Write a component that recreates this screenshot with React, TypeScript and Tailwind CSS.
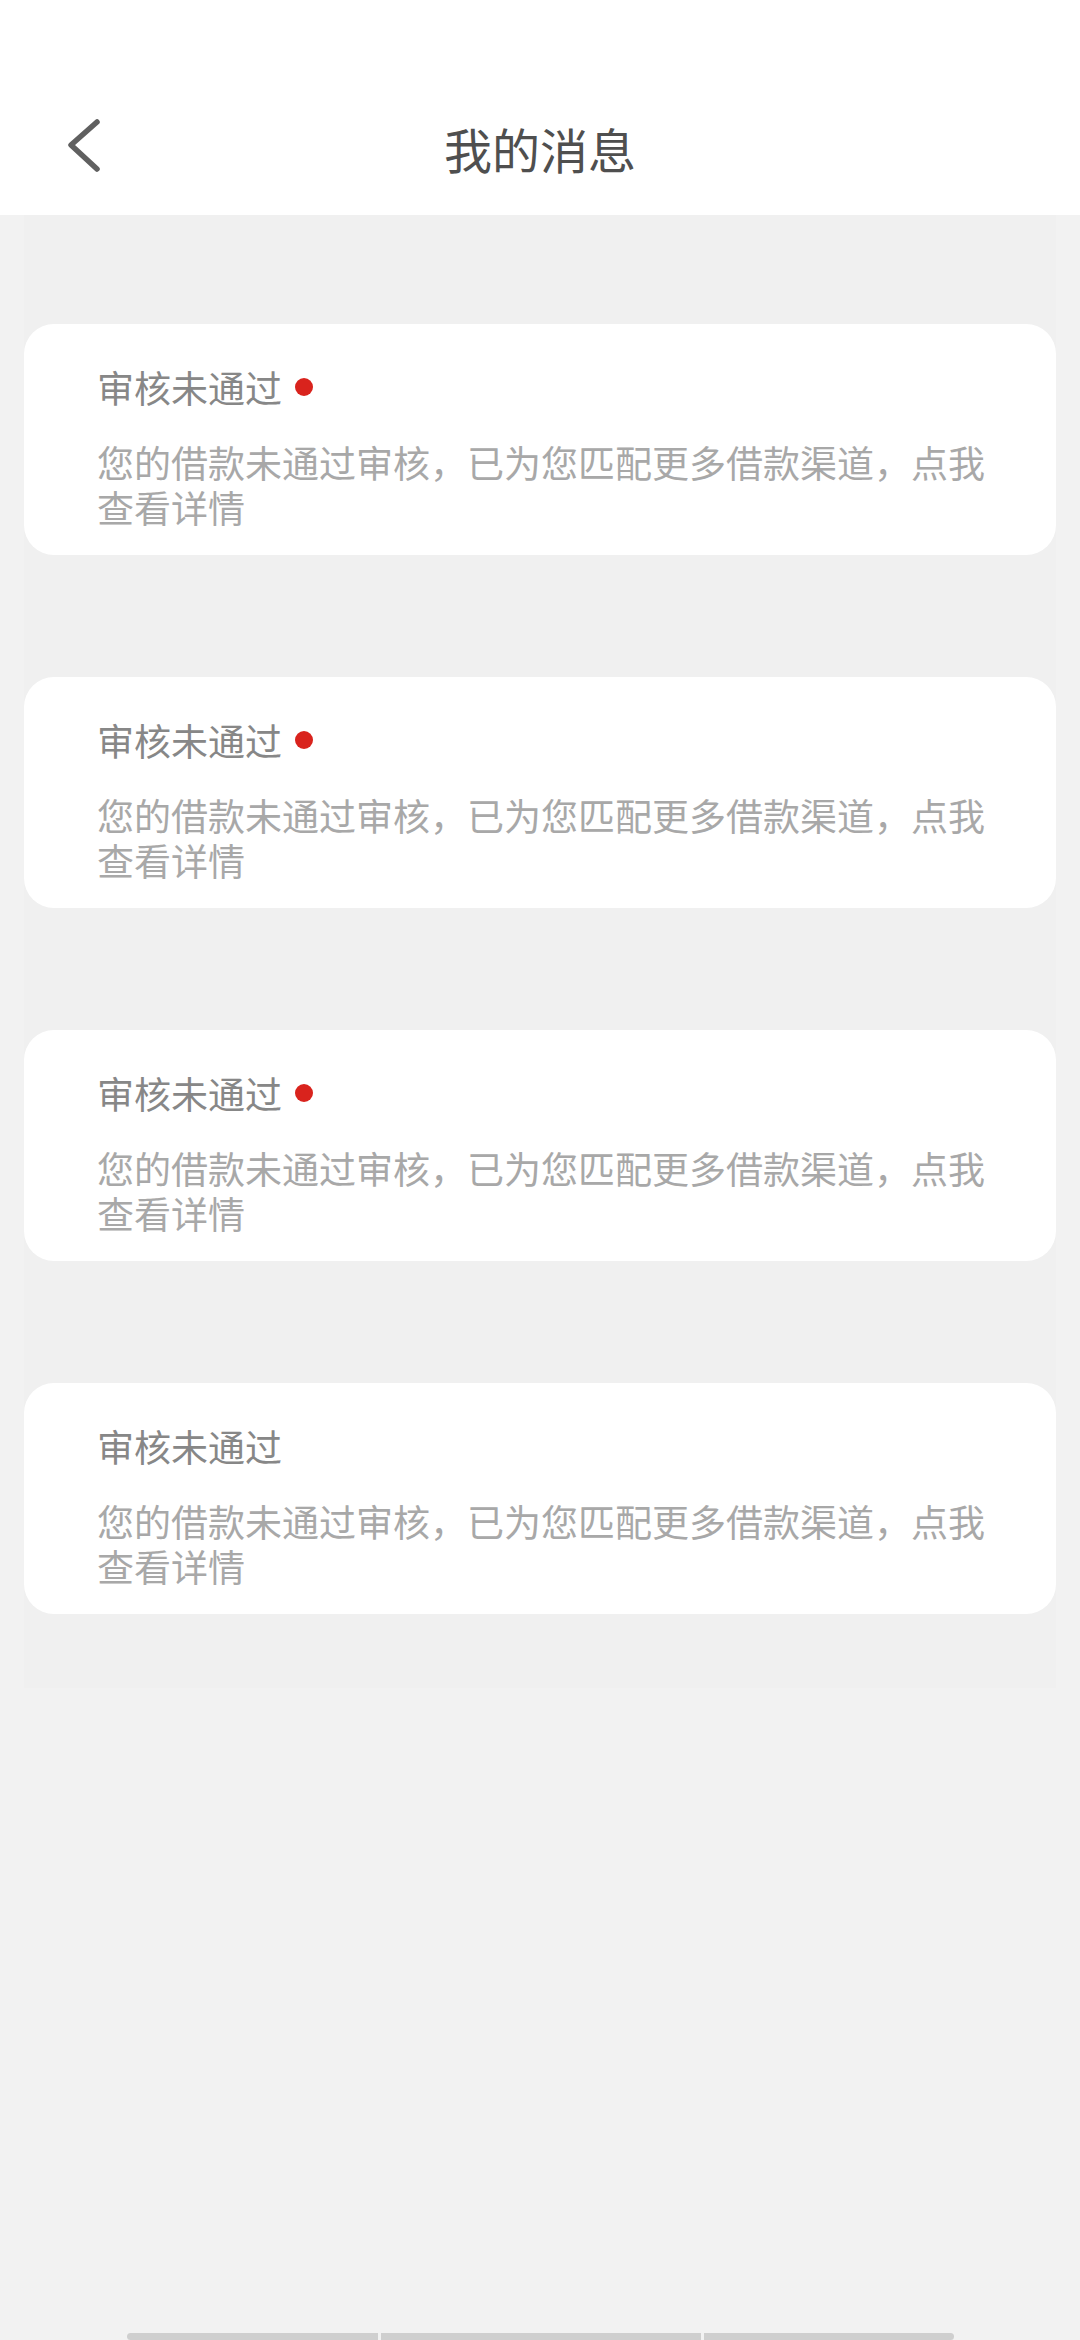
import React from "react";

const FONT = { fontFamily: '"Noto Sans CJK SC", "Noto Sans", sans-serif' };

function Card({ unread }: { unread: boolean }) {
  return (
    <div className="rounded-[30px] bg-white pl-[73px] pr-[40px] pt-[41px] pb-[25px]">
      <div className="flex items-center h-[44px]">
        <span className="text-[37px] leading-[44px] text-[#878787]">审核未通过</span>
        {unread && <span className="ml-[13px] w-[18px] h-[18px] rounded-full bg-[#d9231d]" />}
      </div>
      <p className="mt-[31px] text-[37px] leading-[45px] text-[#a8a8a8]">
        您的借款未通过审核，已为您匹配更多借款渠道，点我查看详情
      </p>
    </div>
  );
}

export default function App() {
  return (
    <div className="min-h-[2340px] w-[1080px] bg-[#f2f2f2] flex flex-col" style={FONT}>
      <header className="bg-white h-[215px] pt-[84px]">
        <div className="relative h-[130px] flex items-center justify-center">
          <svg
            className="absolute left-[60px] top-[30px]"
            width="48"
            height="60"
            viewBox="0 0 48 60"
            fill="none"
          >
            <path d="M37 8 L11 31 L37 55" stroke="#606060" strokeWidth="5.5" strokeLinecap="round" strokeLinejoin="round" />
          </svg>
          <h1 className="text-[48px] leading-[60px] text-[#4f4f4f] font-normal -mt-[2px]">我的消息</h1>
        </div>
      </header>
      <main className="mx-[24px] bg-[#f0f0f0] pt-[109px] pb-[74px] flex flex-col gap-[122px]">
        <Card unread />
        <Card unread />
        <Card unread />
        <Card unread={false} />
      </main>
      <div className="mt-auto flex justify-center gap-[3px] pb-0">
        <div className="w-[251px] h-[7px] bg-[#cfcfcf] rounded-l-full" />
        <div className="w-[320px] h-[7px] bg-[#cfcfcf]" />
        <div className="w-[250px] h-[7px] bg-[#cfcfcf] rounded-r-full" />
      </div>
    </div>
  );
}
